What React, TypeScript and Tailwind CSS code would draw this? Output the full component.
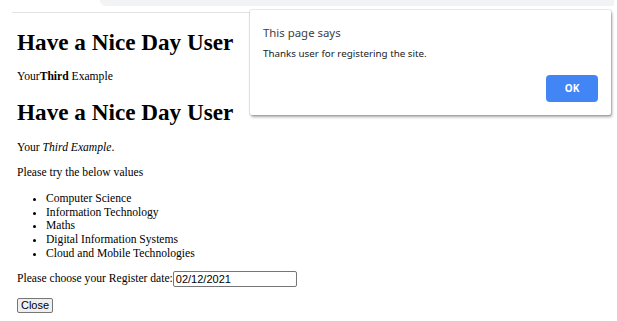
import React from "react";

const items = [
  "Computer Science",
  "Information Technology",
  "Maths",
  "Digital Information Systems",
  "Cloud and Mobile Technologies",
];

export default function App() {
  return (
    <div className="relative w-[617px] h-[321px] overflow-hidden bg-white text-black" style={{ fontFamily: '"Liberation Serif", "Times New Roman", serif' }}>
      {/* browser chrome remnants */}
      <div className="h-[13px] relative">
        <div className="ml-[100px] w-[514px] h-[6px] bg-[#f1f3f4] rounded-bl-[6px]" />
        <div className="ml-[12px] mt-[6px] w-[590px] h-px bg-[#e3e3e3]" />
      </div>

      <div className="pl-[17px]">
        <h1 className="mt-[15px] text-[23.2px] leading-[28px] font-bold">Have a Nice Day User</h1>
        <p className="mt-[14px] text-[11.6px] leading-[14px]">
          Your<b>Third</b> Example
        </p>
        <h1 className="mt-[14px] text-[23.2px] leading-[28px] font-bold">Have a Nice Day User</h1>
        <p className="mt-[15px] text-[11.6px] leading-[14px]">
          Your <i>Third Example</i>.
        </p>
        <p className="mt-[11px] text-[11.6px] leading-[14px]">Please try the below values</p>
        <ul className="mt-[12px] list-disc pl-[29px] text-[11.6px] leading-[13.7px]">
          {items.map((t) => (
            <li key={t}>{t}</li>
          ))}
        </ul>
        <div className="mt-[9px] h-[19px] flex items-center text-[11.6px]">
          <span>Please choose your Register date:</span>
          <div
            className="w-[124px] h-[16px] border border-[#767676] rounded-[2px] pl-[2px] flex items-center text-[11px] leading-none"
            style={{ fontFamily: '"Liberation Sans", Arial, sans-serif' }}
          >
            02/12/2021
          </div>
        </div>
        <button
          className="mt-[9px] w-[36px] h-[15px] bg-[#efefef] border border-[#767676] rounded-[2px] text-[11px] leading-none flex items-center justify-center"
          style={{ fontFamily: '"Liberation Sans", Arial, sans-serif' }}
        >
          Close
        </button>
      </div>

      {/* alert dialog */}
      <div
        className="absolute left-[250px] top-[10px] w-[361px] h-[105px] bg-white rounded-[2px] shadow-[0_0_0_1px_rgba(0,0,0,0.08),1px_2px_3px_rgba(0,0,0,0.35)] flex flex-col"
        style={{ fontFamily: '"Noto Sans", "Open Sans", sans-serif' }}
      >
        <div className="pl-[13px] pt-[15px] text-[11.4px] leading-[16px] text-[#3c4043]">This page says</div>
        <div className="pl-[13px] mt-[6px] text-[9.8px] leading-[14px] text-[#202124]">Thanks user for registering the site.</div>
        <div className="flex justify-end pr-[13px] mt-auto pb-[13px]">
          <div className="w-[52px] h-[27px] rounded-[4px] bg-[#4285f4] text-white text-[10px] font-bold flex items-center justify-center">
            OK
          </div>
        </div>
      </div>
    </div>
  );
}
